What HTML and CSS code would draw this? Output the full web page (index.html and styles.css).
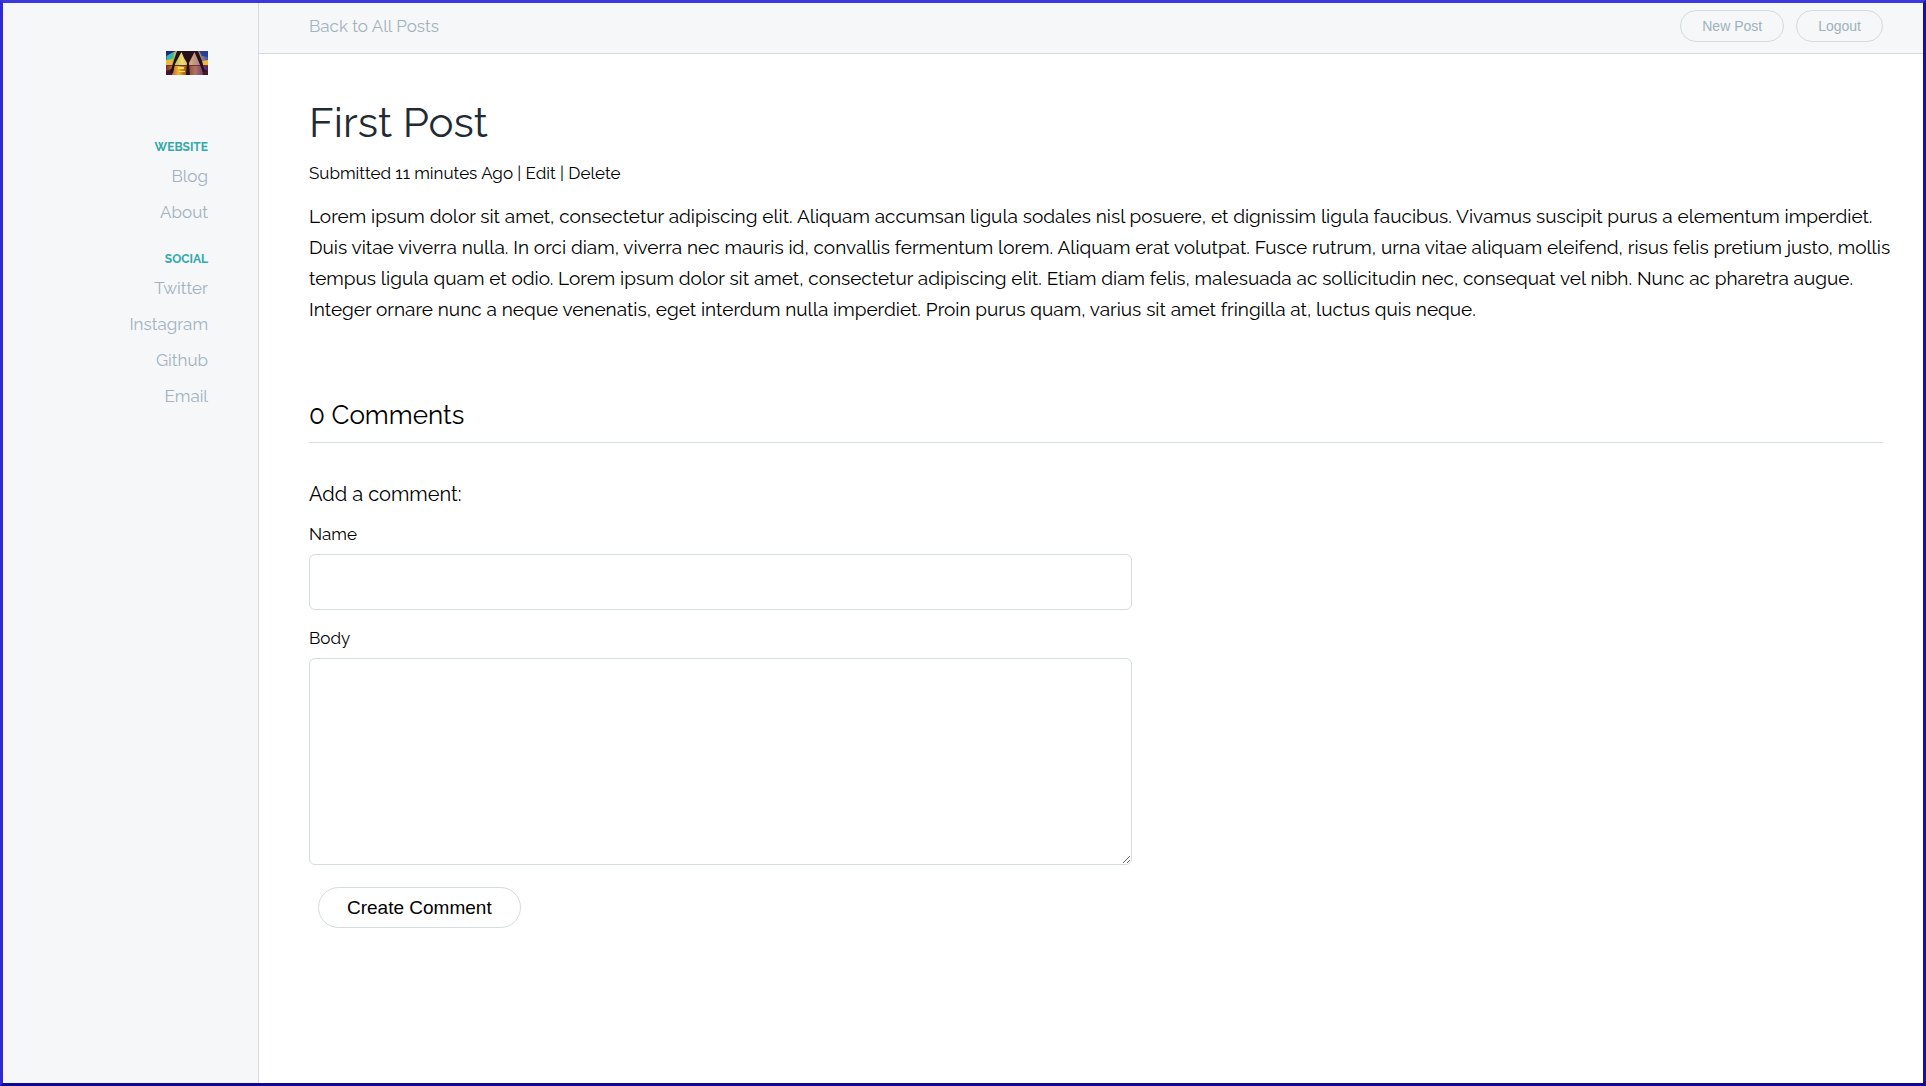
FILE: index.html
```html
<!DOCTYPE html>
<html lang="en">
<head>
<meta charset="utf-8">
<meta name="viewport" content="width=device-width, initial-scale=1">
<title>First Post</title>
<link rel="stylesheet" href="styles.css">
</head>
<body>
<aside class="sidebar">
  <a class="logo" href="#" aria-label="Home">
    <svg width="42" height="24" viewBox="0 0 42 24" aria-hidden="true">
      <defs>
        <linearGradient id="sky" x1="0" y1="0" x2="1" y2="0">
          <stop offset="0" stop-color="#1d7fa8"/><stop offset=".25" stop-color="#c3c95a"/><stop offset=".38" stop-color="#f0dc70"/><stop offset=".65" stop-color="#c99a80"/><stop offset=".82" stop-color="#a4868c"/><stop offset="1" stop-color="#3d55a5"/>
        </linearGradient>
        <linearGradient id="sea" x1="0" y1="0" x2="1" y2="0">
          <stop offset="0" stop-color="#7d2b35"/><stop offset=".3" stop-color="#f2b62c"/><stop offset=".5" stop-color="#8a4a20"/><stop offset=".7" stop-color="#b0706a"/><stop offset="1" stop-color="#4a1f68"/>
        </linearGradient>
      </defs>
      <path fill="url(#sky)" d="M0 0h42v15H0z"/>
      <path fill="#1a2a80" d="M0 0h10L0 5z"/>
      <path fill="#35b9ae" d="M1 5l7-4-2 7-5 2z"/>
      <path fill="#28408f" d="M33 0h9v6l-6-1z"/>
      <path fill="#f0b83a" d="M0 9l7-1-1 6H0zM36 10l6-1v5h-5z"/>
      <path fill="url(#sea)" d="M0 14h42v10H0z"/>
      <path fill="#71313f" d="M0 14h42v1H0z"/>
      <path fill="#471529" d="M0 20l8-3-2 7H0zM36 17l6 3v4h-5z"/>
      <path fill="#f8da63" d="M12 16h6v2h-6zM13 20h6v1h-6z"/>
      <path fill="#261018" d="M11 0h5L9 13 7 22H4l4-13zM28 0h4l4 10 3 11h-2l-5-12zM15 0h14l-4 8-2 4 1 12h-4l1-12-3-5z"/>
    </svg>
  </a>
  <nav class="menu">
    <h2 class="menu-title">WEBSITE</h2>
    <a class="menu-link" href="#">Blog</a>
    <a class="menu-link" href="#">About</a>
    <h2 class="menu-title">SOCIAL</h2>
    <a class="menu-link" href="#">Twitter</a>
    <a class="menu-link" href="#">Instagram</a>
    <a class="menu-link" href="#">Github</a>
    <a class="menu-link" href="#">Email</a>
  </nav>
</aside>
<div class="page">
  <header class="topbar">
    <a class="back" href="#">Back to All Posts</a>
    <div class="actions">
      <button class="pill" type="button">New Post</button>
      <button class="pill" type="button">Logout</button>
    </div>
  </header>
  <main class="content">
    <article>
      <h1 class="title">First Post</h1>
      <p class="meta">Submitted 11 minutes Ago | <a href="#">Edit</a> | <a href="#">Delete</a></p>
      <p class="text">Lorem ipsum dolor sit amet, consectetur adipiscing elit. Aliquam accumsan ligula sodales nisl posuere, et dignissim ligula faucibus. Vivamus suscipit purus a elementum imperdiet. Duis vitae viverra nulla. In orci diam, viverra nec mauris id, convallis fermentum lorem. Aliquam erat volutpat. Fusce rutrum, urna vitae aliquam eleifend, risus felis pretium justo, mollis tempus ligula quam et odio. Lorem ipsum dolor sit amet, consectetur adipiscing elit. Etiam diam felis, malesuada ac sollicitudin nec, consequat vel nibh. Nunc ac pharetra augue. Integer ornare nunc a neque venenatis, eget interdum nulla imperdiet. Proin purus quam, varius sit amet fringilla at, luctus quis neque.</p>
    </article>
    <section>
      <h2 class="comments-title">0 Comments</h2>
      <form class="comment-form">
        <h3 class="form-title">Add a comment:</h3>
        <label class="label" for="name">Name</label>
        <input class="field" id="name" type="text">
        <label class="label" for="body">Body</label>
        <textarea class="field field-body" id="body"></textarea>
        <button class="submit" type="button">Create Comment</button>
      </form>
    </section>
  </main>
</div>
</body>
</html>
```
FILE: styles.css
```css
* {
  box-sizing: border-box;
}

body {
  margin: 0;
  min-height: 100vh;
  display: flex;
  border: 3px solid;
  border-color: #3c36de #1710a8 #0f0599 #3029d0;
  background: #fff;
  color: #000;
  font-family: Raleway, Lato, "Open Sans", sans-serif;
}

a {
  color: inherit;
  text-decoration: none;
}

h1, h2, h3, p {
  margin: 0;
  font-weight: 400;
}

.sidebar {
  flex: none;
  width: 256px;
  padding: 48px 50px 0 0;
  border-right: 1px solid #d5dadf;
  background: #f5f7f9;
  text-align: right;
}

.logo svg {
  display: block;
  margin-left: auto;
}

.menu {
  padding-top: 60px;
}

.menu-title {
  padding: 2px 0 1px;
  color: #32a9ab;
  font-size: 12px;
  font-weight: 700;
  line-height: 20px;
}

.menu-link {
  display: block;
  color: #a3b2be;
  font-size: 17px;
  line-height: 36px;
}

.menu-link + .menu-title {
  margin-top: 17px;
}

.page {
  flex: 1;
  min-width: 0;
}

.topbar {
  display: flex;
  align-items: center;
  justify-content: space-between;
  height: 51px;
  padding: 0 40px 4px 50px;
  border-bottom: 1px solid #d5dadf;
  background: #f5f7f9;
}

.back {
  color: #a3b2be;
  font-size: 17px;
}

.actions {
  display: flex;
  gap: 12px;
}

.pill {
  height: 32px;
  padding: 0 21px;
  border: 1px solid #d3dcdf;
  border-radius: 16px;
  background: transparent;
  color: #9eb2bb;
  font: 14px "Liberation Sans", Arial, sans-serif;
}

.content {
  padding: 41px 40px 40px 50px;
}

.title {
  color: #222b33;
  font-size: 42px;
  line-height: 56px;
}

.meta {
  margin-top: 9px;
  font-size: 17px;
  line-height: 26px;
}

/* the running text may reach slightly into the page gutter */
.text {
  margin: 15px -16px 0 0;
  font-size: 19px;
  line-height: 31px;
}

.comments-title {
  margin-top: 72px;
  padding-bottom: 9px;
  border-bottom: 1px solid #d3dcdf;
  font-size: 26px;
  line-height: 36px;
}

.comment-form {
  display: flex;
  flex-direction: column;
  align-items: flex-start;
  max-width: 823px;
  padding-top: 36px;
}

.form-title {
  font-size: 20px;
  line-height: 30px;
}

.label {
  margin: 13px 0 8px;
  font-size: 17px;
  line-height: 24px;
}

.field {
  width: 100%;
  height: 56px;
  padding: 12px;
  border: 1px solid #d3dcdf;
  border-radius: 6px;
  background: #fff;
  font: inherit;
}

.field + .label {
  margin-top: 16px;
}

.field-body {
  height: 207px;
  resize: vertical;
}

.submit {
  height: 41px;
  margin: 22px 0 0 9px;
  padding: 0 28px;
  border: 1px solid #d3dcdf;
  border-radius: 21px;
  background: #fff;
  color: #000;
  font: 19px "Liberation Sans", Arial, sans-serif;
}
```
